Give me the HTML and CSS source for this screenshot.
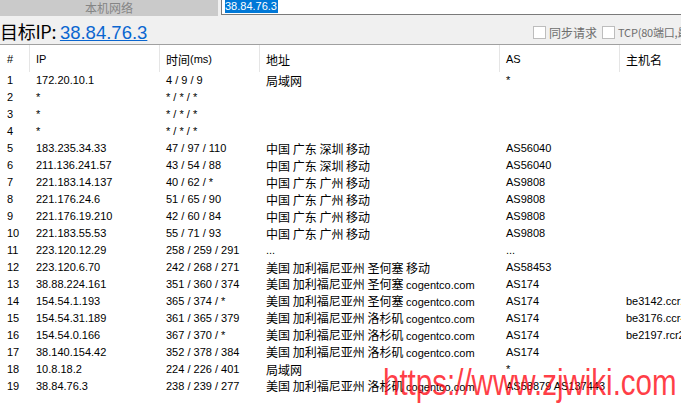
FILE: index.html
```html
<!DOCTYPE html>
<html>
<head>
<meta charset="utf-8">
<link rel="stylesheet" href="styles.css">
</head>
<body>
<div class="topbar">
  <div class="btn">本机网络</div>
  <div class="gap"></div>
  <div class="input"><span class="sel">38.84.76.3</span></div>
</div>
<div class="target">
  <div class="label">目标IP: <a class="link" href="#">38.84.76.3</a></div>
  <div class="opts">
    <span class="cb"></span><span class="opt">同步请求</span>
    <span class="cb cb2"></span><span class="opt">TCP(80端口,最大跳数)</span>
  </div>
</div>
<div class="table">
  <div class="row head">
    <div class="c">#</div><div class="c sep">IP</div><div class="c sep cjk">时间<span class="ms">(ms)</span></div><div class="c sep cjk">地址</div><div class="c sep">AS</div><div class="c sep cjk">主机名</div>
  </div>
  <div class="row"><div class="c">1</div><div class="c">172.20.10.1</div><div class="c">4 / 9 / 9</div><div class="c cjk">局域网</div><div class="c">*</div><div class="c"></div></div>
  <div class="row"><div class="c">2</div><div class="c">*</div><div class="c">* / * / *</div><div class="c cjk"></div><div class="c"></div><div class="c"></div></div>
  <div class="row"><div class="c">3</div><div class="c">*</div><div class="c">* / * / *</div><div class="c cjk"></div><div class="c"></div><div class="c"></div></div>
  <div class="row"><div class="c">4</div><div class="c">*</div><div class="c">* / * / *</div><div class="c cjk"></div><div class="c"></div><div class="c"></div></div>
  <div class="row"><div class="c">5</div><div class="c">183.235.34.33</div><div class="c">47 / 97 / 110</div><div class="c cjk">中国 广东 深圳 移动</div><div class="c">AS56040</div><div class="c"></div></div>
  <div class="row"><div class="c">6</div><div class="c">211.136.241.57</div><div class="c">43 / 54 / 88</div><div class="c cjk">中国 广东 深圳 移动</div><div class="c">AS56040</div><div class="c"></div></div>
  <div class="row"><div class="c">7</div><div class="c">221.183.14.137</div><div class="c">40 / 62 / *</div><div class="c cjk">中国 广东 广州 移动</div><div class="c">AS9808</div><div class="c"></div></div>
  <div class="row"><div class="c">8</div><div class="c">221.176.24.6</div><div class="c">51 / 65 / 90</div><div class="c cjk">中国 广东 广州 移动</div><div class="c">AS9808</div><div class="c"></div></div>
  <div class="row"><div class="c">9</div><div class="c">221.176.19.210</div><div class="c">42 / 60 / 84</div><div class="c cjk">中国 广东 广州 移动</div><div class="c">AS9808</div><div class="c"></div></div>
  <div class="row"><div class="c">10</div><div class="c">221.183.55.53</div><div class="c">55 / 71 / 93</div><div class="c cjk">中国 广东 广州 移动</div><div class="c">AS9808</div><div class="c"></div></div>
  <div class="row"><div class="c">11</div><div class="c">223.120.12.29</div><div class="c">258 / 259 / 291</div><div class="c">...</div><div class="c">...</div><div class="c"></div></div>
  <div class="row"><div class="c">12</div><div class="c">223.120.6.70</div><div class="c">242 / 268 / 271</div><div class="c cjk">美国 加利福尼亚州 圣何塞 移动</div><div class="c">AS58453</div><div class="c"></div></div>
  <div class="row"><div class="c">13</div><div class="c">38.88.224.161</div><div class="c">351 / 360 / 374</div><div class="c cjk">美国 加利福尼亚州 圣何塞 <span class="lat">cogentco.com</span></div><div class="c">AS174</div><div class="c"></div></div>
  <div class="row"><div class="c">14</div><div class="c">154.54.1.193</div><div class="c">365 / 374 / *</div><div class="c cjk">美国 加利福尼亚州 圣何塞 <span class="lat">cogentco.com</span></div><div class="c">AS174</div><div class="c">be3142.ccr22.sjc01.atlas.cogentco.com</div></div>
  <div class="row"><div class="c">15</div><div class="c">154.54.31.189</div><div class="c">361 / 365 / 379</div><div class="c cjk">美国 加利福尼亚州 洛杉矶 <span class="lat">cogentco.com</span></div><div class="c">AS174</div><div class="c">be3176.ccr41.lax01.atlas.cogentco.com</div></div>
  <div class="row"><div class="c">16</div><div class="c">154.54.0.166</div><div class="c">367 / 370 / *</div><div class="c cjk">美国 加利福尼亚州 洛杉矶 <span class="lat">cogentco.com</span></div><div class="c">AS174</div><div class="c">be2197.rcr21.lax04.atlas.cogentco.com</div></div>
  <div class="row"><div class="c">17</div><div class="c">38.140.154.42</div><div class="c">352 / 378 / 384</div><div class="c cjk">美国 加利福尼亚州 洛杉矶 <span class="lat">cogentco.com</span></div><div class="c">AS174</div><div class="c"></div></div>
  <div class="row"><div class="c">18</div><div class="c">10.8.18.2</div><div class="c">224 / 226 / 401</div><div class="c cjk">局域网</div><div class="c">*</div><div class="c"></div></div>
  <div class="row"><div class="c">19</div><div class="c">38.84.76.3</div><div class="c">238 / 239 / 277</div><div class="c cjk">美国 加利福尼亚州 洛杉矶 <span class="lat">cogentco.com</span></div><div class="c">AS58879 AS137443</div><div class="c"></div></div>
</div>
<div class="watermark">https://www.zjwiki.com</div>
</body>
</html>
```
FILE: styles.css
```css
html, body {
  margin: 0;
  padding: 0;
  background: #ffffff;
  width: 681px;
  height: 404px;
  overflow: hidden;
  position: relative;
  font-family: "Liberation Sans", "Noto Sans CJK SC", sans-serif;
  color: #000;
}
.topbar {
  display: flex;
  height: 16px;
  background: #f0f0f0;
}
.btn {
  width: 218px;
  height: 16px;
  background: #cacaca;
  color: #858585;
  font-family: "Noto Sans CJK SC", sans-serif;
  font-size: 12px;
  line-height: 16px;
  text-align: center;
}
.gap {
  width: 3px;
}
.input {
  flex: 1;
  height: 15px;
  background: #fff;
  border-left: 1px solid #7a7a7a;
  border-bottom: 1px solid #7a7a7a;
  box-sizing: border-box;
  padding-left: 3px;
  display: flex;
  align-items: flex-start;
}
.sel {
  background: #0078d7;
  color: #fff;
  font-size: 11px;
  line-height: 13px;
  height: 13px;
  padding-right: 1px;
}
.target {
  height: 28px;
  background: #f0f0f0;
  border-bottom: 1px solid #a0a0a0;
  display: flex;
  align-items: center;
  justify-content: space-between;
  overflow: hidden;
}
.label {
  font-family: "Noto Sans CJK SC", sans-serif;
  font-size: 18px;
  line-height: 28px;
  white-space: nowrap;
  margin-top: 3px;
  letter-spacing: -0.3px;
}
.link {
  font-family: "Liberation Sans", sans-serif;
  color: #0a66d0;
  text-decoration: underline;
  font-size: 18.5px;
  letter-spacing: 0;
}
.opts {
  display: flex;
  align-items: center;
  white-space: nowrap;
  margin-top: 4px;
  flex-shrink: 0;
  width: 148px;
  overflow: hidden;
}
.cb {
  width: 11px;
  height: 11px;
  border: 1px solid #bdbdbd;
  background: #fff;
  flex-shrink: 0;
}
.cb2 {
  margin-left: 5px;
}
.opt {
  margin-left: 3px;
  font-family: "Noto Sans CJK SC", sans-serif;
  font-size: 12px;
  color: #6e6e6e;
}
.cb2 + .opt {
  font-size: 11px;
  letter-spacing: -0.2px;
}
.table {
  background: #fff;
}
.row {
  display: grid;
  grid-template-columns: 29px 130px 100px 240px 120px 1fr;
  height: 17px;
  align-items: center;
  font-size: 11px;
}
.row.head {
  height: 27px;
  align-items: stretch;
}
.head .c {
  display: flex;
  align-items: center;
  padding-top: 1px;
}
.head .sep {
  border-left: 1px solid #e5e5e5;
  padding-left: 6px;
}
.c {
  padding-left: 7px;
  white-space: nowrap;
  overflow: hidden;
  line-height: 17px;
  box-sizing: border-box;
}
.cjk {
  font-family: "Noto Sans CJK SC", sans-serif;
  font-size: 12px;
}
.ms {
  font-family: "Liberation Sans", sans-serif;
  font-size: 11px;
}
.lat {
  font-family: "Liberation Sans", sans-serif;
  font-size: 11px;
}
.watermark {
  position: absolute;
  left: 383px;
  top: 363px;
  font-family: "Liberation Sans", sans-serif;
  font-size: 36px;
  line-height: 40px;
  color: rgba(255, 10, 20, 0.8);
  white-space: nowrap;
  transform: scaleX(0.82);
  transform-origin: left top;
}
```
